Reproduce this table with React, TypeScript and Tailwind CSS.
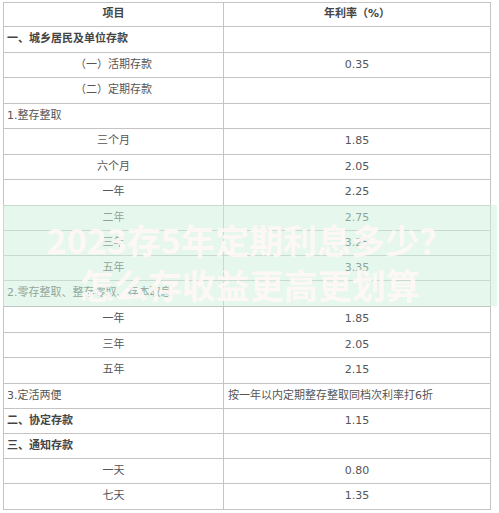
import React from "react";

type Row = {
  h: string;
  left: string;
  leftAlign: "center" | "left";
  bold?: boolean;
  right?: string;
  rightAlign?: "center" | "left";
  rightBold?: boolean;
};

const rows: Row[] = [
  { h: "h-[24px]", left: "项目", leftAlign: "center", bold: true, right: "年利率（%）", rightAlign: "center", rightBold: true },
  { h: "h-[26px]", left: "一、城乡居民及单位存款", leftAlign: "left", bold: true },
  { h: "h-[25px]", left: "（一）活期存款", leftAlign: "center", right: "0.35", rightAlign: "center" },
  { h: "h-[26px]", left: "（二）定期存款", leftAlign: "center" },
  { h: "h-[25px]", left: "1.整存整取", leftAlign: "left" },
  { h: "h-[26px]", left: "三个月", leftAlign: "center", right: "1.85", rightAlign: "center" },
  { h: "h-[25px]", left: "六个月", leftAlign: "center", right: "2.05", rightAlign: "center" },
  { h: "h-[26px]", left: "一年", leftAlign: "center", right: "2.25", rightAlign: "center" },
  { h: "h-[25px]", left: "二年", leftAlign: "center", right: "2.75", rightAlign: "center" },
  { h: "h-[25px]", left: "三年", leftAlign: "center", right: "3.25", rightAlign: "center" },
  { h: "h-[25px]", left: "五年", leftAlign: "center", right: "3.35", rightAlign: "center" },
  { h: "h-[26px]", left: "2.零存整取、整存零取、存本取息", leftAlign: "left" },
  { h: "h-[26px]", left: "一年", leftAlign: "center", right: "1.85", rightAlign: "center" },
  { h: "h-[25px]", left: "三年", leftAlign: "center", right: "2.05", rightAlign: "center" },
  { h: "h-[26px]", left: "五年", leftAlign: "center", right: "2.15", rightAlign: "center" },
  { h: "h-[25px]", left: "3.定活两便", leftAlign: "left", right: "按一年以内定期整存整取同档次利率打6折", rightAlign: "left" },
  { h: "h-[25px]", left: "二、协定存款", leftAlign: "left", bold: true, right: "1.15", rightAlign: "center" },
  { h: "h-[25px]", left: "三、通知存款", leftAlign: "left", bold: true },
  { h: "h-[25px]", left: "一天", leftAlign: "center", right: "0.80", rightAlign: "center" },
  { h: "h-[26px]", left: "七天", leftAlign: "center", right: "1.35", rightAlign: "center" },
];

export default function App() {
  return (
    <div
      className="relative w-[499px] h-[513px] bg-white overflow-hidden"
      style={{ fontFamily: '"DejaVu Sans", "Noto Sans CJK SC", sans-serif' }}
    >
      <div className="pt-[2px] pl-[3px]">
        <div className="w-[488px] border-t border-l border-r border-[#c4c4c4] flex flex-col text-[11px] text-[#555]">
          {rows.map((r, i) => (
            <div key={i} className={`${r.h} flex border-b border-[#c4c4c4]`}>
              <div
                className={`w-[220px] shrink-0 border-r border-[#c4c4c4] flex items-center ${
                  r.leftAlign === "center" ? "justify-center" : "justify-start pl-[3px]"
                } ${r.bold ? "font-bold text-[#444]" : ""}`}
              >
                {r.left}
              </div>
              <div
                className={`flex-1 flex items-center ${
                  r.rightAlign === "left" ? "justify-start pl-[4px]" : "justify-center"
                } ${r.rightBold ? "font-bold text-[#444]" : ""}`}
              >
                {r.right ?? ""}
              </div>
            </div>
          ))}
        </div>
      </div>
      <div className="absolute left-[3px] right-[2px] top-[205px] h-[101px] bg-[#cdf1dc]/50 flex flex-col items-center pt-[12px]">
        <div className="text-[34px] leading-[45px] font-bold text-[#fff6f6]/90 blur-[0.6px] tracking-[0px]"
          style={{ fontFamily: '"Noto Sans CJK SC", sans-serif' }}>
          2023存5年定期利息多少？
        </div>
        <div className="text-[34px] leading-[45px] font-bold text-[#fff6f6]/90 blur-[0.6px]"
          style={{ fontFamily: '"Noto Sans CJK SC", sans-serif' }}>
          怎么存收益更高更划算
        </div>
      </div>
    </div>
  );
}
